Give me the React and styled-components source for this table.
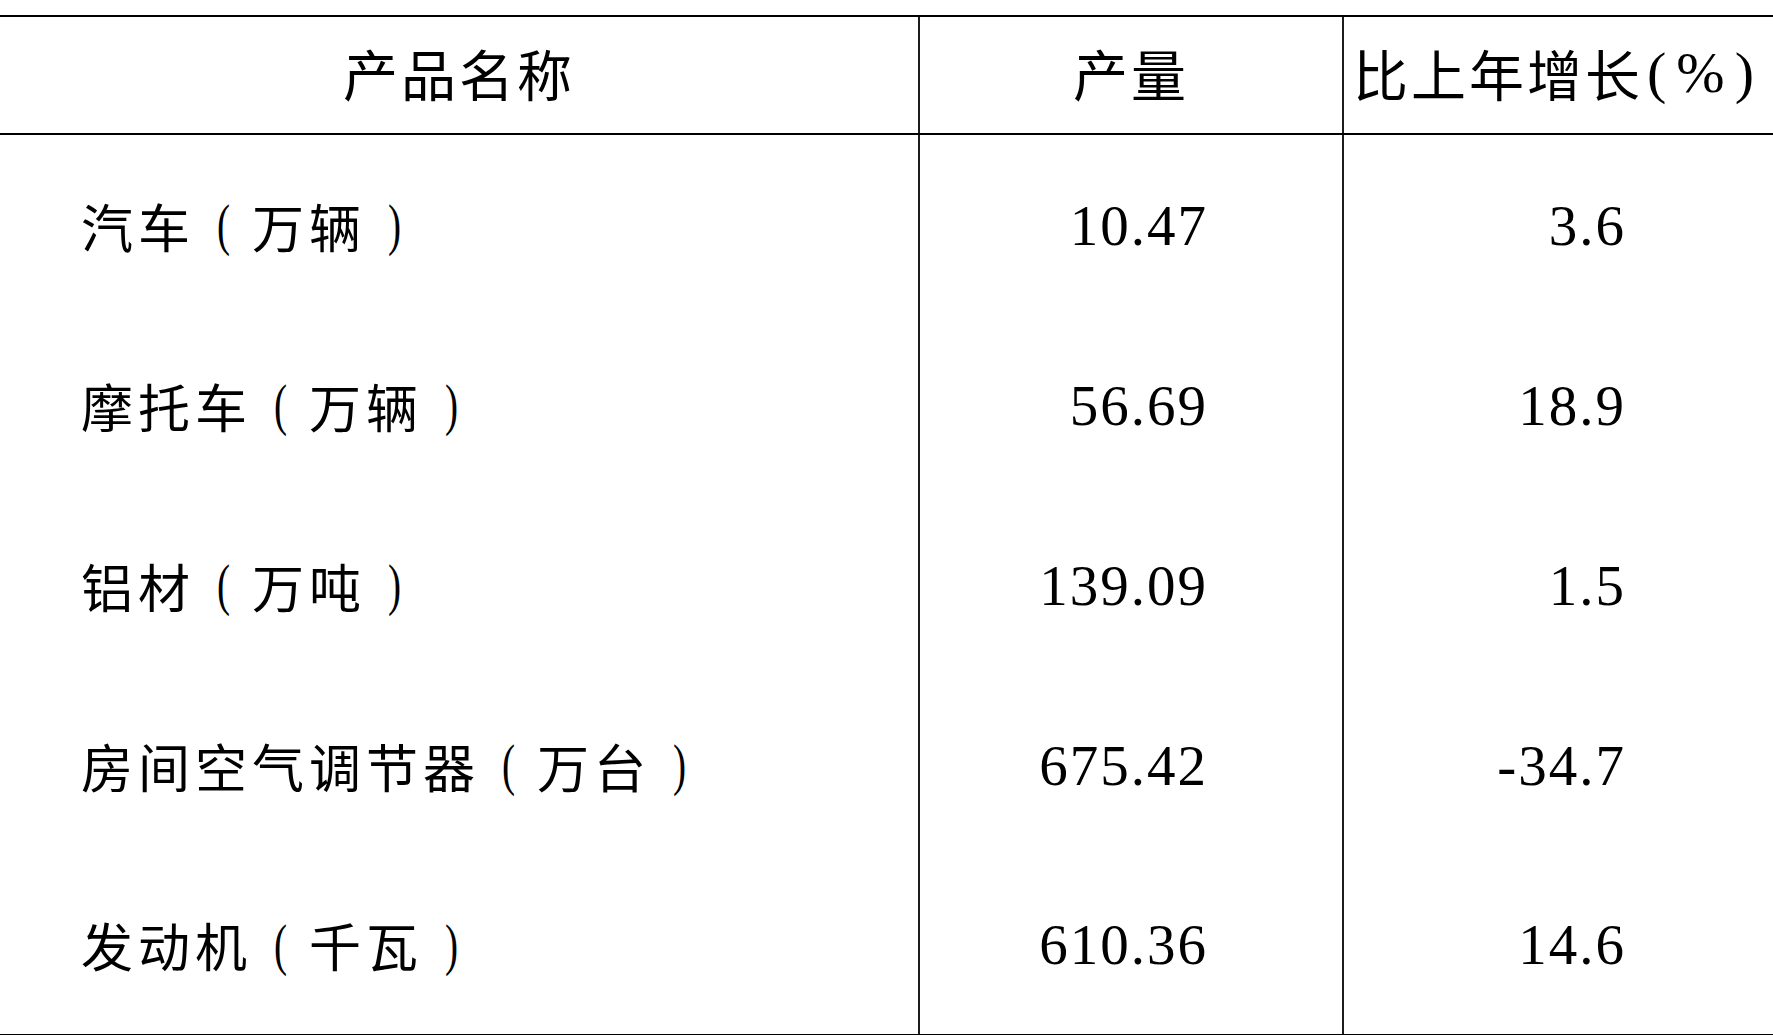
import styled, { createGlobalStyle } from "styled-components";

const GlobalStyle = createGlobalStyle`
  html, body {
    margin: 0;
    padding: 0;
    background: #fff;
  }
  body {
    font-family: "Noto Sans CJK SC", sans-serif;
    color: #000;
    overflow: hidden;
  }
`;

const rows = [
  { name: "汽车", unit: "万辆", output: "10.47", growth: "3.6" },
  { name: "摩托车", unit: "万辆", output: "56.69", growth: "18.9" },
  { name: "铝材", unit: "万吨", output: "139.09", growth: "1.5" },
  { name: "房间空气调节器", unit: "万台", output: "675.42", growth: "-34.7" },
  { name: "发动机", unit: "千瓦", output: "610.36", growth: "14.6" },
];

const Page = () => {
  return (
    <>
      <GlobalStyle />
      <Wrapper>
        <Table>
          <HeadRow>
            <HeadCell>产品名称</HeadCell>
            <HeadCell>产量</HeadCell>
            <HeadCell>
              比上年增长<Unit>(%)</Unit>
            </HeadCell>
          </HeadRow>
          {rows.map((row, i) => (
            <BodyRow key={row.name} last={i === rows.length - 1}>
              <NameCell>
                {row.name}
                <Paren>(</Paren>
                {row.unit}
                <Paren>)</Paren>
              </NameCell>
              <NumCell pad={134}>{row.output}</NumCell>
              <NumCell pad={147}>{row.growth}</NumCell>
            </BodyRow>
          ))}
        </Table>
      </Wrapper>
    </>
  );
};

export default Page;

const Wrapper = styled.div`
  padding-top: 15px;
  width: 1773px;
  height: 1035px;
  box-sizing: border-box;
`;

const Table = styled.div`
  border-top: 2px solid #000;
  display: flex;
  flex-direction: column;
`;

const Row = styled.div`
  display: grid;
  grid-template-columns: 920px 424px 1fr;
  & > div:not(:last-child) {
    border-right: 2px solid #1c1c1c;
  }
`;

const HeadRow = styled(Row)`
  height: 116px;
  border-bottom: 2px solid #000;
`;

const BodyRow = styled(Row)`
  height: ${(p) => (p.last ? "179px" : "180px")};
  border-bottom: ${(p) => (p.last ? "2px solid #000" : "none")};
`;

const Cell = styled.div`
  display: flex;
  align-items: center;
  box-sizing: border-box;
  white-space: nowrap;
`;

const HeadCell = styled(Cell)`
  justify-content: center;
  font-size: 55px;
  letter-spacing: 3px;
  padding-bottom: 6px;
`;

const Unit = styled.span`
  font-family: "Liberation Serif", serif;
  font-size: 58px;
  letter-spacing: 10px;
  margin-left: 4px;
`;

const NameCell = styled(Cell)`
  padding-left: 81px;
  font-size: 52px;
  letter-spacing: 5px;
`;

const Paren = styled.span`
  display: inline-block;
  width: 57px;
  text-align: center;
  letter-spacing: 0;
  font-family: "Liberation Serif", serif;
  font-size: 56px;
  transform: scaleX(0.7);
`;

const NumCell = styled(Cell)`
  justify-content: flex-end;
  padding-right: ${(p) => p.pad}px;
  font-family: "Liberation Serif", serif;
  font-size: 57px;
  letter-spacing: 2px;
`;
